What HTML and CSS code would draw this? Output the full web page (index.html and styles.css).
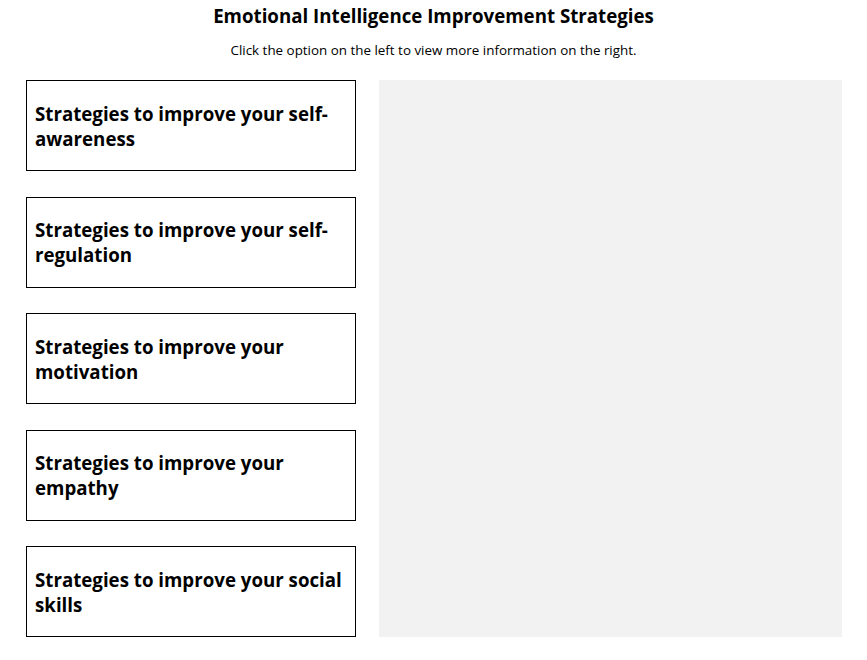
FILE: index.html
```html
<!DOCTYPE html>
<html lang="en">
<head>
  <meta charset="UTF-8" />
  <meta name="viewport" content="width=device-width, initial-scale=1.0"/>
  <title>Emotional Intelligence Improvement Strategies</title>
  <link rel="stylesheet" href="styles.css">
</head>
<body>
  <header>
    <h1>Emotional Intelligence Improvement Strategies</h1>
    <p class="intro">Click the option on the left to view more information on the right.</p>
  </header>
  <main class="layout">
    <div class="options">
      <button type="button" class="option">Strategies to improve your self-awareness</button>
      <button type="button" class="option">Strategies to improve your self-regulation</button>
      <button type="button" class="option">Strategies to improve your motivation</button>
      <button type="button" class="option">Strategies to improve your empathy</button>
      <button type="button" class="option">Strategies to improve your social skills</button>
    </div>
    <section class="details" id="details"></section>
  </main>
</body>
</html>
```

FILE: styles.css
```css
* {
  box-sizing: border-box;
}

body {
  margin: 0;
  font-family: 'Open Sans', 'Liberation Sans', sans-serif;
  color: #000;
  background: #fff;
}

header {
  text-align: center;
  padding-top: 3px;
}

h1 {
  margin: 0;
  font-size: 18.7px;
  line-height: 26px;
  font-weight: bold;
}

.intro {
  margin: 11px 0 0;
  font-size: 13.4px;
  line-height: 20px;
}

.layout {
  display: grid;
  grid-template-columns: 330px 1fr;
  gap: 23px;
  padding: 0 25px 0 26px;
  margin-top: 20px;
}

.options {
  display: flex;
  flex-direction: column;
  gap: 25.5px;
}

.option {
  display: flex;
  align-items: center;
  height: 91px;
  padding: 0 8px;
  border: 1px solid #000;
  background: #fff;
  font-family: inherit;
  font-size: 18.7px;
  line-height: 25px;
  font-weight: bold;
  text-align: left;
  color: #000;
  cursor: pointer;
}

.details {
  background: #f2f2f2;
}
```
